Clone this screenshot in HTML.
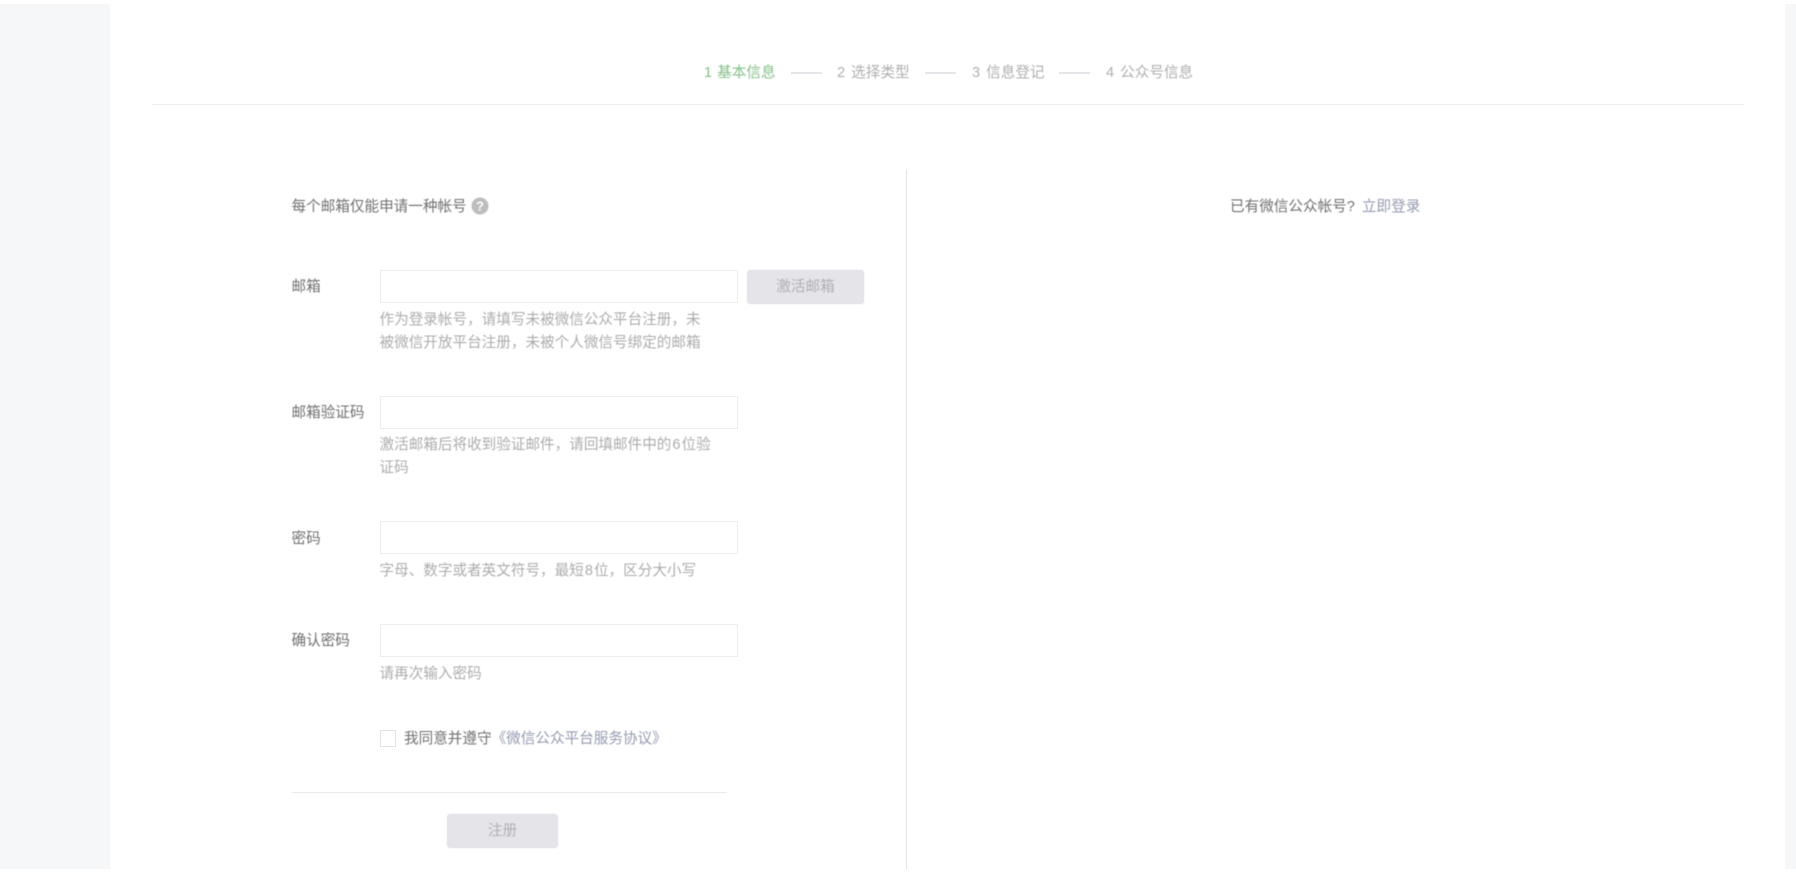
<!DOCTYPE html>
<html lang="zh-CN">
<head>
<meta charset="utf-8">
<title>注册</title>
<style>
html,body{margin:0;padding:0;width:1796px;height:880px;overflow:hidden;background:#fff}
body{position:relative;font-family:"Liberation Sans","Noto Sans CJK SC",sans-serif;font-size:14.6px;color:#707070}
.a{position:absolute}
.t{position:absolute;white-space:nowrap;line-height:20px;height:20px;filter:blur(.5px);word-spacing:2px}
.g{color:#acacac}
.l{color:#959bb0}
.i{position:absolute;left:379.5px;width:356px;height:31px;border:1.5px solid #ededef;background:#fff;filter:blur(.3px)}
.b{position:absolute;background:#e5e5e9;border:1px solid #dfdfe3;border-radius:3px;color:#b0b0b4;text-align:center;box-sizing:border-box;height:33.5px;line-height:33.5px;filter:blur(.5px)}
.s{color:#afafaf}
.d{position:absolute;top:72px;height:2px;width:31px;background:#e4e6e9;filter:blur(.3px)}
.n{padding:0 1px}
</style>
</head>
<body>
<div class="a" style="left:0;top:4px;width:110px;height:865px;background:#f6f7f9"></div>
<div class="a" style="left:1785px;top:4px;width:11px;height:865px;background:#f6f7f9"></div>

<div class="t" style="left:704px;top:63px;color:#86c08a;word-spacing:1px">1 基本信息</div>
<div class="d" style="left:791px"></div>
<div class="t s" style="left:837px;top:63px">2 选择类型</div>
<div class="d" style="left:925px"></div>
<div class="t s" style="left:972px;top:63px">3 信息登记</div>
<div class="d" style="left:1059px"></div>
<div class="t s" style="left:1106px;top:63px">4 公众号信息</div>
<div class="a" style="left:152px;top:104px;width:1592px;height:1px;background:#eceef1"></div>

<div class="a" style="left:906px;top:169px;width:1px;height:700px;background:#e4e4e4"></div>

<div class="t" style="left:291.5px;top:197px">每个邮箱仅能申请一种帐号</div>
<svg class="a" style="left:471px;top:197px;filter:blur(.4px)" width="18" height="18" viewBox="0 0 18 18">
<circle cx="9" cy="9" r="8.5" fill="#bdbdbd"/>
<text x="9" y="13.5" text-anchor="middle" font-family="Liberation Sans" font-size="13" font-weight="bold" fill="#fff">?</text>
</svg>

<div class="t" style="left:1230px;top:197px;word-spacing:3px">已有微信公众帐号? <span class="l">立即登录</span></div>

<div class="t" style="left:291.5px;top:277px">邮箱</div>
<div class="i" style="top:270px"></div>
<div class="b" style="left:747px;top:270px;width:117px">激活邮箱</div>
<div class="t g" style="left:379.5px;top:310px">作为登录帐号，请填写未被微信公众平台注册，未</div>
<div class="t g" style="left:379.5px;top:333px">被微信开放平台注册，未被个人微信号绑定的邮箱</div>

<div class="t" style="left:291.5px;top:403px">邮箱验证码</div>
<div class="i" style="top:396px"></div>
<div class="t g" style="left:379.5px;top:435px">激活邮箱后将收到验证邮件，请回填邮件中的<span class="n">6</span>位验</div>
<div class="t g" style="left:379.5px;top:458px">证码</div>

<div class="t" style="left:291.5px;top:528.5px">密码</div>
<div class="i" style="top:521px"></div>
<div class="t g" style="left:379.5px;top:561px">字母、数字或者英文符号，最短<span class="n">8</span>位，区分大小写</div>

<div class="t" style="left:291.5px;top:630.5px">确认密码</div>
<div class="i" style="top:624px"></div>
<div class="t g" style="left:379.5px;top:664px">请再次输入密码</div>

<div class="a" style="left:379.5px;top:730px;width:14.5px;height:14.5px;border:1.5px solid #e2e2e2;background:#fff;filter:blur(.3px)"></div>
<div class="t" style="left:404px;top:729px">我同意并遵守<span class="l">《微信公众平台服务协议》</span></div>

<div class="a" style="left:291.5px;top:792px;width:435px;height:1px;background:#e9e9ec"></div>
<div class="b" style="left:447px;top:814px;width:111px">注册</div>
</body>
</html>
